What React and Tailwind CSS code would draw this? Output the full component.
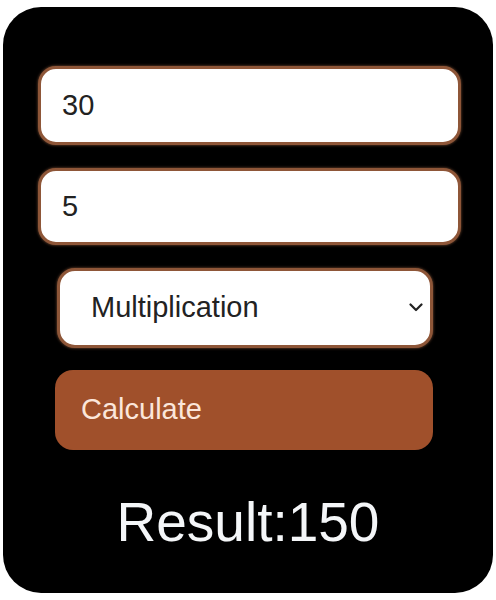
import { useState } from 'react';

const fieldClass =
  "h-full w-full rounded-[18px] border-[3px] border-[#8e5638] bg-white text-[29px] text-[#222] outline-none shadow-[0_0_3px_rgba(190,120,80,0.7)]";

const App = () => {
  const [first, setFirst] = useState('30');
  const [second, setSecond] = useState('5');
  const [op, setOp] = useState('Multiplication');

  return (
    <div className="h-[600px] w-[496px] bg-white pt-[7px] pl-[3px] font-['Liberation_Sans',Arial,sans-serif]">
      <div className="flex h-[586px] w-[490px] flex-col rounded-[38px] bg-black">
        {/* Number inputs */}
        <div className="ml-[35px] mt-[59px] h-[79px] w-[423px]">
          <input
            className={`${fieldClass} pl-[21px]`}
            value={first}
            onChange={(e) => setFirst(e.target.value)}
          />
        </div>
        <div className="ml-[35px] mt-[23px] h-[77px] w-[423px]">
          <input
            className={`${fieldClass} pl-[21px]`}
            value={second}
            onChange={(e) => setSecond(e.target.value)}
          />
        </div>

        {/* Operation select */}
        <div className="relative ml-[54px] mt-[23px] h-[80px] w-[376px]">
          <select
            className={`${fieldClass} appearance-none pl-[31px]`}
            value={op}
            onChange={(e) => setOp(e.target.value)}
          >
            <option>Addition</option>
            <option>Subtraction</option>
            <option>Multiplication</option>
            <option>Division</option>
          </select>
          <svg
            className="pointer-events-none absolute right-[10px] top-[35px]"
            width="14"
            height="9"
            viewBox="0 0 14 9"
            fill="none"
          >
            <polyline points="1.5,1.5 7,7 12.5,1.5" stroke="#222" strokeWidth="2.2" strokeLinecap="round" strokeLinejoin="round" />
          </svg>
        </div>

        {/* Calculate button */}
        <button className="ml-[52px] mt-[22px] h-[80px] w-[378px] rounded-[18px] bg-[#a0502b] pl-[26px] text-left text-[29px] text-[#fbe6da]">
          Calculate
        </button>

        {/* Result */}
        <p className="mt-[45px] text-center text-[55px] leading-none text-[#f4f6f8]">
          Result:150
        </p>
      </div>
    </div>
  );
};

export default App;
